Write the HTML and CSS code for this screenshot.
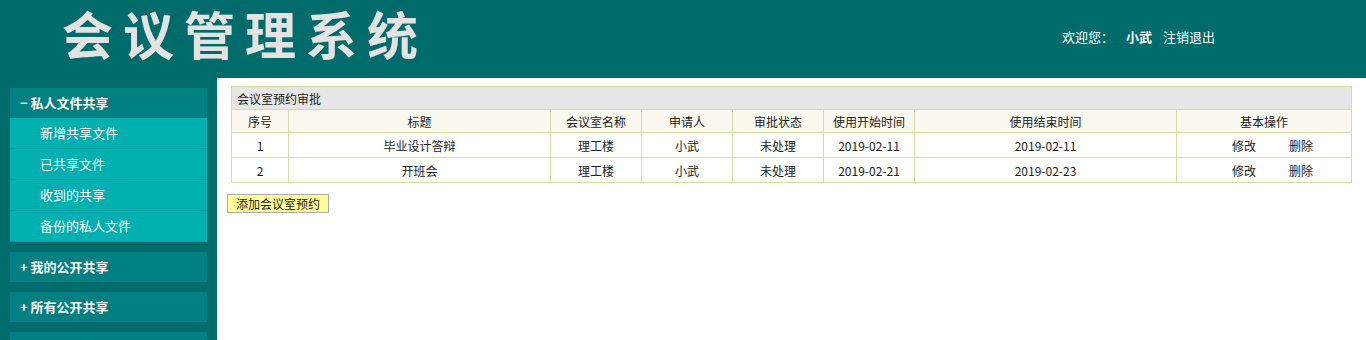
FILE: index.html
```html
<!DOCTYPE html>
<html lang="zh-CN">
<head>
    <meta charset="UTF-8">
    <title>会议管理系统</title>
    <link rel="stylesheet" href="styles.css">
</head>
<body>
    <div class="header">
        <div class="logo">会议管理系统</div>
        <div class="welcome">欢迎您：<b>小武</b><a href="#">注销退出</a></div>
    </div>

    <div class="container">
        <div class="sidebar">
            <div class="menu">
                <div class="menu-title">− 私人文件共享</div>
                <ul class="menu-list">
                    <li>新增共享文件</li>
                    <li>已共享文件</li>
                    <li>收到的共享</li>
                    <li>备份的私人文件</li>
                </ul>
            </div>
            <div class="menu">
                <div class="menu-title">+ 我的公开共享</div>
            </div>
            <div class="menu">
                <div class="menu-title">+ 所有公开共享</div>
            </div>
            <div class="menu">
                <div class="menu-title"></div>
            </div>
        </div>

        <div class="main">
            <table class="grid">
                <tr>
                    <th class="caption" colspan="8">会议室预约审批</th>
                </tr>
                <tr class="head">
                    <td class="c-no">序号</td>
                    <td class="c-wide">标题</td>
                    <td class="c-mid">会议室名称</td>
                    <td class="c-mid">申请人</td>
                    <td class="c-mid">审批状态</td>
                    <td class="c-mid">使用开始时间</td>
                    <td class="c-wide">使用结束时间</td>
                    <td class="c-ops">基本操作</td>
                </tr>
                <tr>
                    <td>1</td>
                    <td>毕业设计答辩</td>
                    <td>理工楼</td>
                    <td>小武</td>
                    <td>未处理</td>
                    <td>2019-02-11</td>
                    <td>2019-02-11</td>
                    <td class="ops"><a href="#">修改</a><a href="#">删除</a></td>
                </tr>
                <tr>
                    <td>2</td>
                    <td>开班会</td>
                    <td>理工楼</td>
                    <td>小武</td>
                    <td>未处理</td>
                    <td>2019-02-21</td>
                    <td>2019-02-23</td>
                    <td class="ops"><a href="#">修改</a><a href="#">删除</a></td>
                </tr>
            </table>
            <button class="add-btn">添加会议室预约</button>
        </div>
    </div>
</body>
</html>
```

FILE: styles.css
```css
body {
    margin: 0;
    padding: 0;
    font-family: "Noto Sans CJK SC", "Liberation Sans", sans-serif;
    font-size: 12px;
    color: #222;
    background-color: #fff;
}
a {
    color: inherit;
    text-decoration: none;
}
.header {
    height: 78px;
    background-color: #006b6b;
    display: flex;
    align-items: center;
}
.logo {
    align-self: flex-start;
    margin-left: 62px;
    margin-top: 3px;
    font-size: 51px;
    font-weight: bold;
    letter-spacing: 10px;
    line-height: 60px;
    color: #e3e3e3;
}
.welcome {
    margin-left: auto;
    margin-right: 151px;
    margin-top: -5px;
    font-size: 13px;
    color: #fff;
}
.welcome b {
    margin-left: 12px;
    margin-right: 11px;
}
.container {
    display: flex;
    height: 262px;
    overflow: hidden;
}
.sidebar {
    width: 198px;
    padding: 10px 10px 0 10px;
    background-color: #006b6b;
    display: flex;
    flex-direction: column;
    gap: 10px;
}
.menu-title {
    height: 30px;
    line-height: 30px;
    padding-left: 10px;
    background-color: #008080;
    color: #fff;
    font-size: 13px;
    font-weight: bold;
}
.menu-list {
    list-style: none;
    margin: 0;
    padding: 0;
}
.menu-list li {
    height: 30px;
    line-height: 30px;
    padding-left: 30px;
    background-color: #00afaf;
    border-bottom: 1px solid #00a0a0;
    color: #fff;
    font-size: 13px;
}
.main {
    flex: 1;
    padding: 8px 14px 0 10px;
}
.grid {
    margin-left: 4px;
    width: 1121px;
    border-collapse: collapse;
    border: 1px solid #d5dda5;
}
.grid td, .grid th {
    border: 1px solid #d5dda5;
    text-align: center;
    padding: 0;
    font-weight: normal;
}
.grid td {
    height: 24px;
}
.grid .caption {
    height: 22px;
    text-align: left;
    padding-left: 5px;
    background-color: #e6e6e6;
}
.grid .head td {
    height: 22px;
    background-color: #f9f9f0;
}
.c-no {
    width: 56px;
}
.c-wide {
    width: 261px;
}
.c-mid {
    width: 90px;
}
.grid .ops {
    text-align: left;
    padding-left: 55px;
}
.ops a + a {
    margin-left: 33px;
}
.add-btn {
    margin-top: 11px;
    height: 19px;
    padding: 0 8px;
    font-family: "Noto Sans CJK SC", "Liberation Sans", sans-serif;
    font-size: 12px;
    line-height: 15px;
    color: #222;
    background-color: #ffff99;
    border: 1px solid #aaa;
}
```
